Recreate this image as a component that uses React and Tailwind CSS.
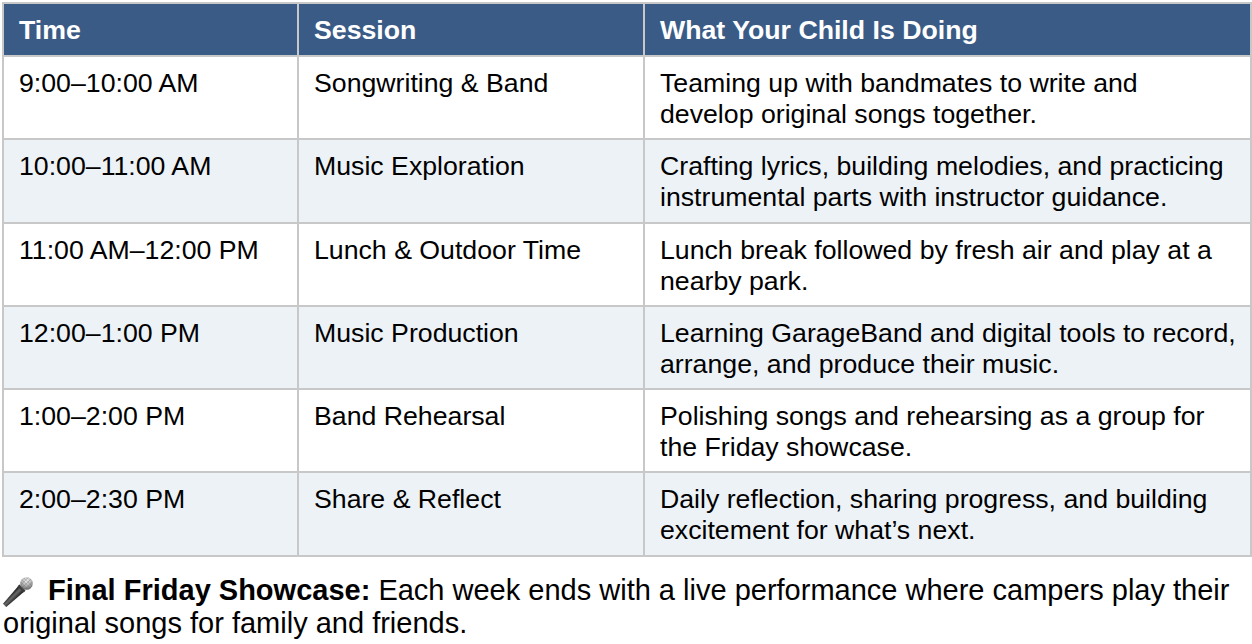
const rows = [
  ['9:00–10:00 AM', 'Songwriting & Band', 'Teaming up with bandmates to write and develop original songs together.'],
  ['10:00–11:00 AM', 'Music Exploration', 'Crafting lyrics, building melodies, and practicing instrumental parts with instructor guidance.'],
  ['11:00 AM–12:00 PM', 'Lunch & Outdoor Time', 'Lunch break followed by fresh air and play at a nearby park.'],
  ['12:00–1:00 PM', 'Music Production', 'Learning GarageBand and digital tools to record, arrange, and produce their music.'],
  ['1:00–2:00 PM', 'Band Rehearsal', 'Polishing songs and rehearsing as a group for the Friday showcase.'],
  ['2:00–2:30 PM', 'Share & Reflect', 'Daily reflection, sharing progress, and building excitement for what’s next.'],
];

function Mic() {
  return (
    <svg viewBox="0 0 30 30" className="inline-block w-[30px] h-[30px] align-middle mr-[15px]">
      <defs>
        <radialGradient id="head" cx="0.35" cy="0.35" r="0.75">
          <stop offset="0" stopColor="#f4f4f4" />
          <stop offset="0.55" stopColor="#b0b0b0" />
          <stop offset="1" stopColor="#5a5a5a" />
        </radialGradient>
        <linearGradient id="grip" x1="0" y1="0" x2="1" y2="0">
          <stop offset="0" stopColor="#111" />
          <stop offset="0.45" stopColor="#6a6a6a" />
          <stop offset="1" stopColor="#1a1a1a" />
        </linearGradient>
      </defs>
      <g transform="rotate(45 15 15)">
        <path d="M11 10.5 L19 10.5 L17.3 34 L12.7 34 Z" fill="url(#grip)" />
        <rect x="10.6" y="8.6" width="8.8" height="2.8" rx="0.6" fill="#3c3c3c" />
        <circle cx="15" cy="3" r="6.3" fill="url(#head)" />
        <path d="M9.3 1 H20.7 M9 3.5 H21 M9.6 6 H20.4 M12 -2.6 V8.5 M15 -3.3 V9.2 M18 -2.6 V8.5" stroke="#666" strokeWidth="0.5" opacity="0.75" />
      </g>
    </svg>
  );
}

export default function App() {
  return (
    <div className="bg-white w-[1252px] h-[644px] overflow-hidden pl-[2px] pt-[2px] font-['Liberation_Sans',Arial,sans-serif] text-[26.7px] leading-[31px] text-black">
      <table className="w-[1250px] border-collapse table-fixed">
        <colgroup>
          <col className="w-[295px]" />
          <col className="w-[346px]" />
          <col />
        </colgroup>
        <thead>
          <tr className="bg-[#3b5b87] text-white">
            {['Time', 'Session', 'What Your Child Is Doing'].map((h) => (
              <th key={h} className="border-2 border-[#c8c8c8] text-left font-bold pl-[15px] pr-[12px] pt-[11px] pb-[9px]">{h}</th>
            ))}
          </tr>
        </thead>
        <tbody>
          {rows.map((r, i) => (
            <tr key={r[0]} className={i % 2 === 1 ? 'bg-[#edf2f7]' : 'bg-white'}>
              {r.map((c, j) => (
                <td key={j} className="border-2 border-[#c8c8c8] align-top pl-[15px] pr-[12px] pt-[11px] pb-[8.3px]">{c}</td>
              ))}
            </tr>
          ))}
        </tbody>
      </table>
      <p className="mt-[17px] pl-[1px] text-[29px] leading-[32px]">
        <Mic />
        <b>Final Friday Showcase:</b> Each week ends with a live performance where campers play their original songs for family and friends.
      </p>
    </div>
  );
}
